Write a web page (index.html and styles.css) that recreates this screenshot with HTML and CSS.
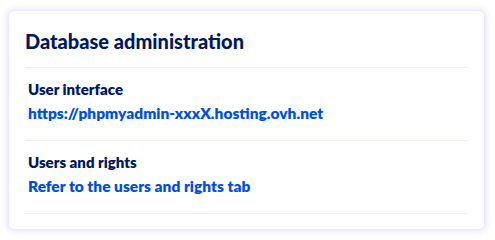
FILE: index.html
```html
<!DOCTYPE html>
<html lang="en">
<head>
<meta charset="utf-8">
<link rel="stylesheet" href="styles.css">
</head>
<body>
<section class="card">
  <h2 class="card-title">Database administration</h2>
  <div class="row">
    <div class="label">User interface</div>
    <a class="link" href="#">https://phpmyadmin-xxxX.hosting.ovh.net</a>
  </div>
  <div class="row">
    <div class="label">Users and rights</div>
    <a class="link" href="#">Refer to the users and rights tab</a>
  </div>
</section>
</body>
</html>
```
FILE: styles.css
```css
html, body {
  margin: 0;
  padding: 0;
  background: #ffffff;
}
body {
  font-family: "Lato", "Noto Sans", sans-serif;
  padding: 10px 10px 10px 8px;
}
.card {
  width: 477px;
  height: 220px;
  box-sizing: border-box;
  border: 1px solid #ebebfa;
  border-radius: 6px;
  box-shadow: 0 0 6px 1px rgba(190, 190, 245, 0.45);
  padding: 16px 16px 0 16px;
  background: #fff;
}
.card-title {
  margin: 0;
  font-size: 20px;
  line-height: 28px;
  font-weight: 900;
  color: #00185e;
  padding: 0 0 12px 0;
  border-bottom: 1px solid #eef0f5;
}
.row {
  display: flex;
  flex-direction: column;
  gap: 5px;
  padding: 12px 4px 17px 3px;
  border-bottom: 1px solid #eef0f5;
}
.label {
  font-size: 15px;
  line-height: 19px;
  font-weight: 800;
  color: #00185e;
}
.link {
  font-size: 15.5px;
  line-height: 19px;
  font-weight: 800;
  color: #0050d7;
  text-decoration: none;
}
```
